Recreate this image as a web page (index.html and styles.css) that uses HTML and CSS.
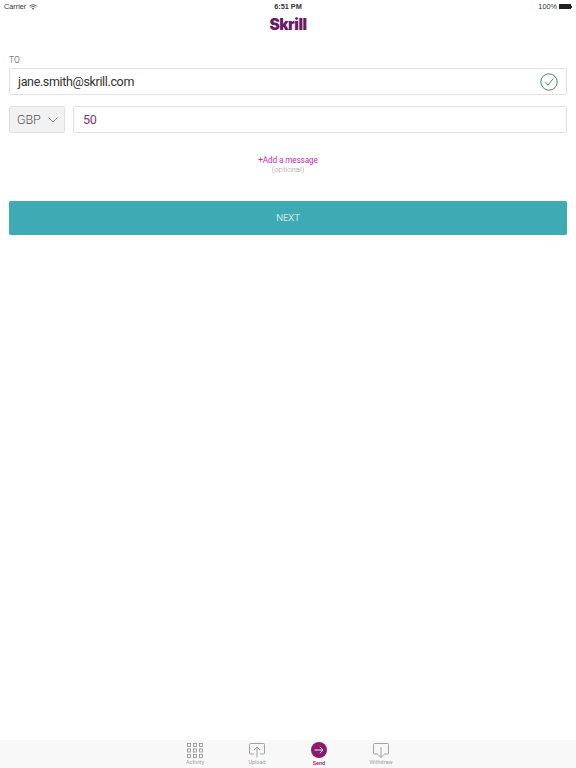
FILE: index.html
```html
<!DOCTYPE html>
<html lang="en">
<head>
	<meta charset="UTF-8">
	<title>Skrill - Send</title>
	<link rel="stylesheet" href="styles.css">
</head>
<body>
<div class="app">
	<div class="status">
		<div class="status_left">
			<span>Carrier</span>
			<svg class="wifi" width="8" height="6" viewBox="0 0 8 6" fill="none" stroke="#444" stroke-width=".8">
				<path d="M.4 2Q4-.8 7.600 2M1.600 3.300Q4 1.400 6.400 3.300"/>
				<path d="M2.800 4.500Q4 3.600 5.200 4.500L4 5.800Z" fill="#444" stroke="none"/>
			</svg>
		</div>
		<div class="status_time">6:51 PM</div>
		<div class="status_right">
			<span>100%</span>
			<span class="battery"></span><span class="battery_tip"></span>
		</div>
	</div>

	<div class="logo">Skrill</div>

	<div class="form">
		<div class="label">TO</div>
		<div class="field field_to">
			<span class="email">jane.smith@skrill.com</span>
			<svg class="check" width="18" height="18" viewBox="0 0 18 18" fill="none" stroke="#4d8a63">
				<circle cx="9" cy="9" r="8.200" stroke-width="1"/>
				<path d="M5 9.200 8 12.200 13.200 5.600" stroke-width="1"/>
			</svg>
		</div>
		<div class="amount_row">
			<div class="currency">
				<span>GBP</span>
				<svg width="10" height="6" viewBox="0 0 10 6" fill="none" stroke="#8a8a8a"><path d="M.5.5 5 5 9.500 .5"/></svg>
			</div>
			<div class="field field_amount">50</div>
		</div>
		<div class="message">
			<div class="add">+Add a message</div>
			<div class="optional">(optional)</div>
		</div>
		<div class="next">NEXT</div>
	</div>

	<div class="tabs">
		<div class="tab">
			<svg width="16" height="15" viewBox="0 0 16 15" fill="none" stroke="#8c8c8c" stroke-width=".8">
				<rect x=".5" y=".5" width="3" height="3"/><rect x="6.500" y=".5" width="3" height="3"/><rect x="12.500" y=".5" width="3" height="3"/>
				<rect x=".5" y="6" width="3" height="3"/><rect x="6.500" y="6" width="3" height="3"/><rect x="12.500" y="6" width="3" height="3"/>
				<rect x=".5" y="11.500" width="3" height="3"/><rect x="6.500" y="11.500" width="3" height="3"/><rect x="12.500" y="11.500" width="3" height="3"/>
			</svg>
			<span>Activity</span>
		</div>
		<div class="tab">
			<svg width="16" height="15" viewBox="0 0 16 15" fill="none" stroke="#8c8c8c" stroke-width=".8">
				<path d="M5 11H1.500Q.5 11 .5 10V1.500Q.5.5 1.500.5H14.500Q15.500.5 15.500 1.500V10Q15.500 11 14.500 11H11"/>
				<path d="M8 14.500V4M5 7 8 4 11 7"/>
			</svg>
			<span>Upload</span>
		</div>
		<div class="tab tab_on">
			<svg width="16" height="16" viewBox="0 0 16 16" fill="none" stroke="#fff" stroke-width=".9">
				<circle cx="8" cy="8" r="8" fill="#8a1a6e" stroke="none"/>
				<path d="M3.500 8H12M8.800 4.800 12 8 8.800 11.200"/>
			</svg>
			<span>Send</span>
		</div>
		<div class="tab">
			<svg width="16" height="15" viewBox="0 0 16 15" fill="none" stroke="#8c8c8c" stroke-width=".8">
				<path d="M5 11H1.500Q.5 11 .5 10V1.500Q.5.5 1.500.5H14.500Q15.500.5 15.500 1.500V10Q15.500 11 14.500 11H11"/>
				<path d="M8 4V14.500M5 11.500 8 14.500 11 11.500"/>
			</svg>
			<span>Withdraw</span>
		</div>
	</div>
</div>
</body>
</html>
```

FILE: styles.css
```css
html, body { margin: 0; padding: 0; background: #fff; }
body { font-family: Roboto, "Liberation Sans", sans-serif; color: #333; }

.app { width: 576px; height: 768px; display: flex; flex-direction: column; overflow: hidden; }

.status { height: 13px; padding: 0 4px; display: flex; justify-content: space-between; align-items: center; position: relative; font: 7.300px/13px "Liberation Sans", Arial, sans-serif; color: #333; }
.status_left { display: flex; align-items: center; gap: 3px; }
.status_time { font-weight: bold; position: absolute; left: 0; right: 0; text-align: center; }
.status_right { display: flex; align-items: center; }
.status_right span:first-child { margin-right: 2px; }
.battery { width: 12px; height: 5px; background: #222; }
.battery_tip { width: 1px; height: 2px; background: #222; }

.logo { height: 22px; margin-top: 1px; font: 900 15.500px/22px Inter, sans-serif; letter-spacing: -.5px; color: #6b1a66; text-align: center; }

.form { padding: 0 9px; }
.label { margin-top: 18px; height: 14px; font-size: 8.500px; line-height: 13px; font-weight: 300; color: #444; }

.field { box-sizing: border-box; height: 27px; border: 1px solid #e2e2e2; border-radius: 2px; display: flex; align-items: center; background: #fff; }
.field_to { justify-content: space-between; padding: 0 8px; }
.email { font-size: 12.500px; letter-spacing: -.35px; color: #333; }

.amount_row { display: flex; gap: 8px; margin-top: 11px; }
.currency { box-sizing: border-box; width: 56px; height: 27px; padding: 0 6px 0 7px; border: 1px solid #e0e0e0; border-radius: 2px; background: #f2f2f2; display: flex; align-items: center; justify-content: space-between; font-size: 12.500px; font-weight: 300; letter-spacing: -.1px; color: #555; }
.field_amount { flex: 1; padding: 0 9px; font-size: 12.500px; letter-spacing: -.2px; color: #80307a; }

.message { margin-top: 23px; text-align: center; }
.add { height: 9px; font-size: 8.200px; line-height: 9px; letter-spacing: -.1px; color: #c62ab0; }
.optional { height: 9px; font-size: 7.800px; line-height: 9px; font-weight: 300; color: #999; }

.next { margin-top: 27px; height: 34px; border-radius: 2px; background: #3eabb4; color: #fff; font-size: 9.500px; font-weight: 300; line-height: 34px; text-align: center; }

.tabs { margin-top: auto; height: 28px; background: #f8f8f8; display: flex; justify-content: center; gap: 30px; }
.tab { width: 32px; padding-top: 3px; display: flex; flex-direction: column; align-items: center; gap: 1px; font-size: 5.500px; line-height: 7px; color: #a0a0a0; }
.tab_on { padding-top: 2px; gap: 2px; color: #8a1a6e; font-weight: 500; }
```
